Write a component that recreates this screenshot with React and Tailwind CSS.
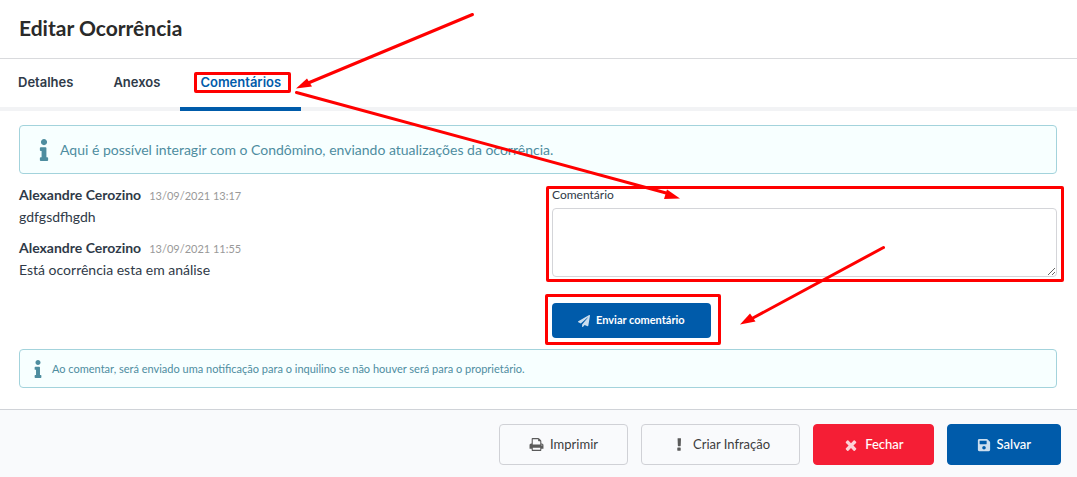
import { useState } from 'react';
import { FaInfo, FaPaperPlane, FaSave } from 'react-icons/fa';

const tabs = ['Detalhes', 'Anexos', 'Comentários'];

const comments = [
  { id: 1, author: 'Alexandre Cerozino', date: '13/09/2021 13:17', text: 'gdfgsdfhgdh' },
  { id: 2, author: 'Alexandre Cerozino', date: '13/09/2021 11:55', text: 'Está ocorrência esta em análise' },
];

const icons = {
  print:
    'M448 1536h896v-256h-896v256zm0-640h896v-384h-160q-40 0-68-28t-28-68v-160h-640v640zm1152 64q0-26-19-45t-45-19-45 19-19 45 19 45 45 19 45-19 19-45zm128 0v416q0 13-9.5 22.5t-22.5 9.5h-224v160q0 40-28 68t-68 28h-960q-40 0-68-28t-28-68v-160h-224q-13 0-22.5-9.5t-9.5-22.5v-416q0-79 56.5-135.5t135.5-56.5h64v-544q0-40 28-68t68-28h672q40 0 88 20t76 48l152 152q28 28 48 76t20 88v256h64q79 0 135.5 56.5t56.5 135.5z',
  exclamation:
    'M1088 1248v224q0 26-19 45t-45 19h-256q-26 0-45-19t-19-45v-224q0-26 19-45t45-19h256q26 0 45 19t19 45zm30-1056l-28 768q-1 26-20.5 45t-45.5 19h-192q-26 0-45.5-19t-20.5-45l-28-768q-1-26 17.5-45t44.5-19h256q26 0 44.5 19t17.5 45z',
  times:
    'M1490 1322q0 40-28 68l-136 136q-28 28-68 28t-68-28l-294-294-294 294q-28 28-68 28t-68-28l-136-136q-28-28-28-68t28-68l294-294-294-294q-28-28-28-68t28-68l136-136q28-28 68-28t68 28l294 294 294-294q28-28 68-28t68 28l136 136q28 28 28 68t-28 68l-294 294 294 294q28 28 28 68z',
};

function Icon({ name, className }) {
  return (
    <svg viewBox="0 0 1792 1792" fill="currentColor" className={className} aria-hidden="true">
      <path d={icons[name]} />
    </svg>
  );
}

// Red frame around an element of the tutorial
function Highlight({ className }) {
  return <span className={`pointer-events-none absolute rounded-xs border-3 border-[#ff0000] ${className}`} />;
}

function Arrows() {
  return (
    <svg className="pointer-events-none absolute left-0 top-0" width="1077" height="477" fill="none" aria-hidden="true">
      <g stroke="#ff0000" strokeWidth="3" strokeLinecap="round">
        <path d="M472.500 14.500L307 83.500" />
        <path d="M296.500 92.500L668 193.500" />
        <path d="M883.500 247.500L752 318.500" />
      </g>
      <g fill="#ff0000">
        <path d="M296 88.500L307 78.500L312 86.500Z" />
        <path d="M680 198.500L664 199L667 189.500Z" />
        <path d="M740 324.500L750 313.500L755.500 321.500Z" />
      </g>
    </svg>
  );
}

function Comment({ comment }) {
  return (
    <div className="mb-[10px]">
      <div className="flex items-baseline gap-2 leading-5">
        <span className="text-sm font-bold">{comment.author}</span>
        <span className="text-[11px] text-[#999999]">{comment.date}</span>
      </div>
      <p className="text-sm leading-[22px]">{comment.text}</p>
    </div>
  );
}

const App = () => {
  const [active, setActive] = useState('Comentários');
  const [text, setText] = useState('');

  return (
    <div className="relative w-full overflow-hidden bg-white font-[Lato,sans-serif] text-[#2f3a48]">
      <header className="border-b border-[#d9dadd] px-[19px] pb-4 pt-[14px]">
        <h1 className="text-[21px] font-bold leading-7 text-[#2a2a2a]">Editar Ocorrência</h1>
      </header>

      <nav className="flex border-b-4 border-[#f2f3f5] font-[Inter,sans-serif]">
        {tabs.map((tab) => (
          <button
            key={tab}
            type="button"
            onClick={() => setActive(tab)}
            className={`-mb-1 border-b-4 px-5 pb-[13px] pt-[11px] text-[13px] font-semibold leading-6 first:pl-[18px] ${
              active === tab ? 'border-[#005baa] text-[#005baa]' : 'border-transparent'
            }`}
          >
            <span className="relative">
              {tab}
              {tab === 'Comentários' && <Highlight className="-bottom-[3px] -left-1.5 -right-[10px] -top-0.5" />}
            </span>
          </button>
        ))}
      </nav>

      <main className="pb-[21px] pl-[19px] pr-5 pt-[14px]">
        <div className="flex items-center gap-2 rounded border border-[#a3d3dc] bg-[#f7ffff] px-4 py-3 text-[#4e8d9f]">
          <FaInfo className="h-[22px] w-4" />
          <p className="text-sm leading-[23px]">
            Aqui é possível interagir com o Condômino, enviando atualizações da ocorrência.
          </p>
        </div>

        <div className="grid grid-cols-2 gap-7 pt-[11px]">
          <section>
            {comments.map((comment) => (
              <Comment key={comment.id} comment={comment} />
            ))}
          </section>

          <form onSubmit={(e) => e.preventDefault()}>
            <div className="relative">
              <label htmlFor="comentario" className="block pb-[3px] text-xs leading-5">
                Comentário
              </label>
              <textarea
                id="comentario"
                value={text}
                onChange={(e) => setText(e.target.value)}
                className="block h-[69px] w-full resize rounded border border-[#d4d5d9] bg-white p-2 text-sm"
              />
              <Highlight className="-bottom-[5px] -left-1.5 -right-[7px] top-px" />
            </div>
            <div className="relative mt-[26px] w-fit">
              <button
                type="submit"
                className="flex h-[35px] items-center justify-center gap-1.5 rounded bg-[#005baa] px-[26px] text-[11px] font-bold text-white"
              >
                <FaPaperPlane className="size-3 opacity-80" />
                Enviar comentário
              </button>
              <Highlight className="-bottom-[7px] -left-[7px] -right-[10px] -top-[9px]" />
            </div>
          </form>
        </div>

        <div className="mt-[11px] flex items-center gap-2 rounded border border-[#a3d3dc] bg-[#f7ffff] px-3 py-2 text-[#4e8d9f]">
          <FaInfo className="h-[18px] w-3" />
          <p className="text-[11px] leading-[21px]">
            Ao comentar, será enviado uma notificação para o inquilino se não houver será para o proprietário.
          </p>
        </div>
      </main>

      <footer className="flex justify-end gap-[13px] border-t border-[#d0d3d8] bg-[#f9fafc] px-4 pb-3 pt-[14px] text-[13px] text-[#3c3c3c]">
        <button type="button" className="flex h-[41px] items-center gap-1.5 rounded border border-[#d0d1d6] px-[29px]">
          <Icon name="print" className="size-[15px] text-[#5a5a5a]" />
          Imprimir
        </button>
        <button type="button" className="flex h-[41px] items-center gap-1.5 rounded border border-[#d0d1d6] px-[29px]">
          <Icon name="exclamation" className="size-4 text-[#5a5a5a]" />
          Criar Infração
        </button>
        <button
          type="button"
          className="flex h-[41px] items-center gap-1.5 rounded border border-[#f51e35] bg-[#f51e35] px-[29px] font-medium text-white"
        >
          <Icon name="times" className="size-4 opacity-80" />
          Fechar
        </button>
        <button
          type="button"
          className="flex h-[41px] items-center gap-1.5 rounded border border-[#005baa] bg-[#005baa] px-[29px] font-medium text-white"
        >
          <FaSave className="size-[14px] opacity-80" />
          Salvar
        </button>
      </footer>

      <Arrows />
    </div>
  );
};

export default App;
